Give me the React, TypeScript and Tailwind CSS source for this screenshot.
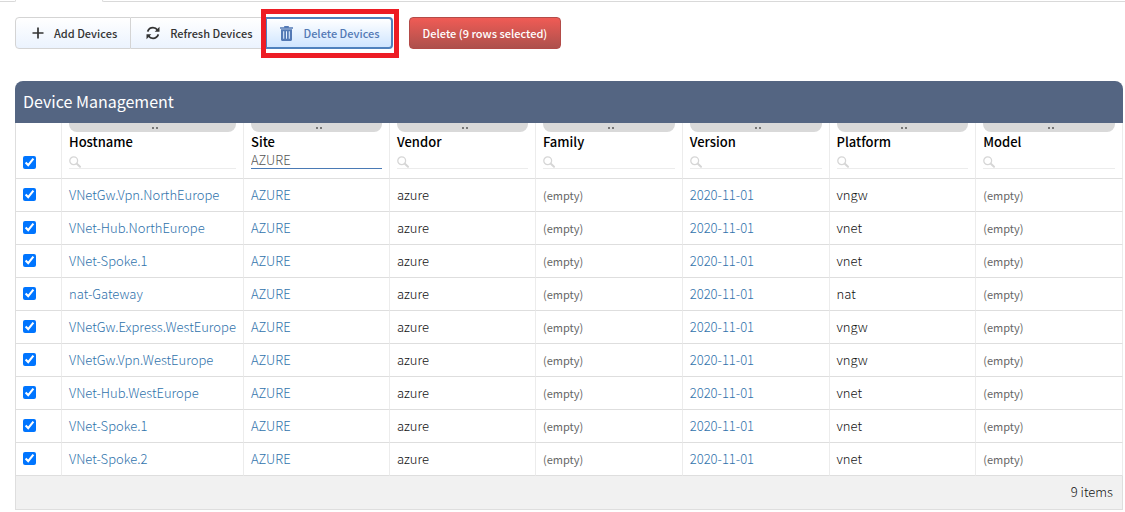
import React, { useState } from "react";

const columns = ["Hostname", "Site", "Vendor", "Family", "Version", "Platform", "Model"];

const devices = [
  { host: "VNetGw.Vpn.NorthEurope", platform: "vngw" },
  { host: "VNet-Hub.NorthEurope", platform: "vnet" },
  { host: "VNet-Spoke.1", platform: "vnet" },
  { host: "nat-Gateway", platform: "nat" },
  { host: "VNetGw.Express.WestEurope", platform: "vngw" },
  { host: "VNetGw.Vpn.WestEurope", platform: "vngw" },
  { host: "VNet-Hub.WestEurope", platform: "vnet" },
  { host: "VNet-Spoke.1", platform: "vnet" },
  { host: "VNet-Spoke.2", platform: "vnet" },
];

function PlusIcon() {
  return (
    <svg width="12" height="12" viewBox="0 0 12 12" fill="none" stroke="currentColor" strokeWidth="1.7" aria-hidden="true">
      <path d="M6 0.5v11M0.5 6h11" />
    </svg>
  );
}

function RefreshIcon() {
  return (
    <svg width="14" height="14" viewBox="0 0 14 14" fill="none" stroke="currentColor" strokeWidth="1.7" aria-hidden="true">
      <path d="M1.6 5.6C2.6 3 4.6 1.7 7 1.7c2 0 3.4.8 4.5 2.3" />
      <path d="M12.4 8.4C11.4 11 9.4 12.3 7 12.3c-2 0-3.4-.8-4.5-2.3" />
      <path d="M13.5 0.8v4.9H8.7z" fill="currentColor" stroke="none" />
      <path d="M0.5 13.2V8.3h4.8z" fill="currentColor" stroke="none" />
    </svg>
  );
}

function TrashIcon() {
  return (
    <svg width="13" height="15" viewBox="0 0 13 15" fill="currentColor" aria-hidden="true">
      <path d="M4.2 0h4.6v1.2H13v1.6H0V1.2h4.2z" />
      <path fillRule="evenodd" d="M1 3.3h11v10.2c0 .9-.6 1.5-1.500 1.500h-8C1.600 15 1 14.400 1 13.500zM3.200 5.200v7.500h1V5.200zM6 5.200v7.500h1V5.200zM8.800 5.200v7.500h1V5.200z" />
    </svg>
  );
}

function SearchIcon() {
  return (
    <svg className="pointer-events-none absolute top-1 left-0" width="12" height="12" viewBox="0 0 12 12" fill="none" stroke="#d6d6d6" aria-hidden="true">
      <circle cx="4.7" cy="4.700" r="3.900" strokeWidth="1.300" />
      <path d="M7.600 7.600l3.400 3.200" strokeWidth="2" strokeLinecap="round" />
    </svg>
  );
}

function Empty() {
  return <span className="block text-[11px] font-normal text-[#666]">(empty)</span>;
}

function CellLink({ children }: { children: React.ReactNode }) {
  return (
    <a href="#" className="text-[#2f72ab]">
      {children}
    </a>
  );
}

export default function App() {
  const [selected, setSelected] = useState<boolean[]>(devices.map(() => true));
  const [filters, setFilters] = useState<Record<string, string>>({ Site: "AZURE" });
  const count = selected.filter(Boolean).length;
  const cell = "h-[33px] border-r border-b border-r-[#ececec] border-b-[#dedede] px-[7px] py-0 whitespace-nowrap";

  return (
    <div className="bg-white font-['Noto_Sans_CJK_SC',sans-serif] text-[13px] leading-5 text-[#111]">
      <div className="flex h-[2px]">
        <div className="w-4 rounded-br-sm border-r border-b border-[#d9d9d9]" />
        <div className="w-[86px]" />
        <div className="flex-1 rounded-bl-sm border-b border-l border-[#d9d9d9]" />
      </div>

      <div className="flex items-center gap-4 pt-[15px] pl-[15px]">
        <div className="flex h-8 text-[11px] font-medium text-[#333]">
          <button type="button" className="flex items-center gap-[10px] rounded-l border border-[#d4d4d4] bg-linear-to-b from-white to-[#ebf3fe] pr-[13px] pl-4">
            <PlusIcon />
            Add Devices
          </button>
          <button type="button" className="flex items-center gap-[10px] border-y border-[#d4d4d4] bg-linear-to-b from-white to-[#ebf3fe] pr-[13px] pl-[15px]">
            <RefreshIcon />
            Refresh Devices
          </button>
          <div className="relative flex">
            <button type="button" className="flex items-center gap-[10px] rounded-r border-2 border-[#4f81bd] bg-linear-to-b from-white to-[#cfe5ff] pr-[11px] pl-[13px] text-[#5379b5]">
              <TrashIcon />
              Delete Devices
            </button>
            <div className="pointer-events-none absolute -right-[6px] -left-1 -top-2 -bottom-[9px] border-[5px] border-[#ed1c24]" />
          </div>
        </div>
        <button type="button" className="h-8 rounded border border-[#b34b48] bg-linear-to-b from-[#f05b55] to-[#ad504c] px-[13px] text-[11px] font-medium text-white">
          Delete ({count} rows selected)
        </button>
      </div>

      <main className="mt-8 mr-[2px] ml-[15px]">
        <h1 className="rounded-t-lg bg-[#546582] px-2 pt-[7px] pb-[9px] text-base leading-[26px] font-normal text-white">Device Management</h1>
        <table className="w-full table-fixed border-separate border-spacing-0 border-l border-[#dedede] text-left font-light">
          <colgroup>
            <col className="w-[46px]" />
            <col className="w-[182px]" />
            <col span={2} className="w-[146px]" />
            <col span={4} />
          </colgroup>
          <thead>
            <tr>
              <th className="h-14 border-r border-b border-r-[#ececec] border-b-[#dedede] px-[7px] pt-0 pb-[9px] align-bottom">
                <input
                  type="checkbox"
                  aria-label="Select all devices"
                  className="block size-[13px]"
                  checked={count === devices.length}
                  onChange={(e) => setSelected(devices.map(() => e.target.checked))}
                />
              </th>
              {columns.map((name) => {
                const value = filters[name] ?? "";
                return (
                  <th key={name} className="h-14 border-r border-b border-r-[#ececec] border-b-[#dedede] px-[7px] py-0 align-top font-medium text-black">
                    <div className="flex h-[9px] items-center justify-center gap-[2px] rounded-b-lg bg-[#d9d9d9] pl-1">
                      <span className="size-[2px] bg-[#777]" />
                      <span className="size-[2px] bg-[#777]" />
                    </div>
                    <label htmlFor={"filter-" + name} className="block">
                      {name}
                    </label>
                    <div className="relative">
                      <input
                        id={"filter-" + name}
                        type="text"
                        value={value}
                        onChange={(e) => setFilters({ ...filters, [name]: e.target.value })}
                        className={
                          value
                            ? "block h-[17px] w-full border-b border-[#4a7ab5] p-0 font-light text-[#555] outline-none"
                            : "block h-[17px] w-full border-b border-[#ececec] p-0 font-light text-[#555] outline-none"
                        }
                      />
                      {!value && <SearchIcon />}
                    </div>
                  </th>
                );
              })}
            </tr>
          </thead>
          <tbody>
            {devices.map((d, i) => (
              <tr key={i}>
                <td className="h-[33px] border-r border-b border-r-[#ececec] border-b-[#dedede] px-[7px] pt-0 pb-[2px]">
                  <input
                    type="checkbox"
                    aria-label={"Select " + d.host}
                    className="block size-[13px]"
                    checked={selected[i]}
                    onChange={() => setSelected(selected.map((s, j) => (j === i ? !s : s)))}
                  />
                </td>
                <td className={cell}><CellLink>{d.host}</CellLink></td>
                <td className={cell}><CellLink>AZURE</CellLink></td>
                <td className={cell}>azure</td>
                <td className={cell}><Empty /></td>
                <td className={cell}><CellLink>2020-11-01</CellLink></td>
                <td className={cell}>{d.platform}</td>
                <td className={cell}><Empty /></td>
              </tr>
            ))}
          </tbody>
          <tfoot>
            <tr>
              <td colSpan={8} className="h-[34px] border-r border-b border-[#dedede] bg-[#f1f1f1] px-[9px] pt-0 pb-[2px] text-right">
                {devices.length} items
              </td>
            </tr>
          </tfoot>
        </table>
      </main>
    </div>
  );
}
